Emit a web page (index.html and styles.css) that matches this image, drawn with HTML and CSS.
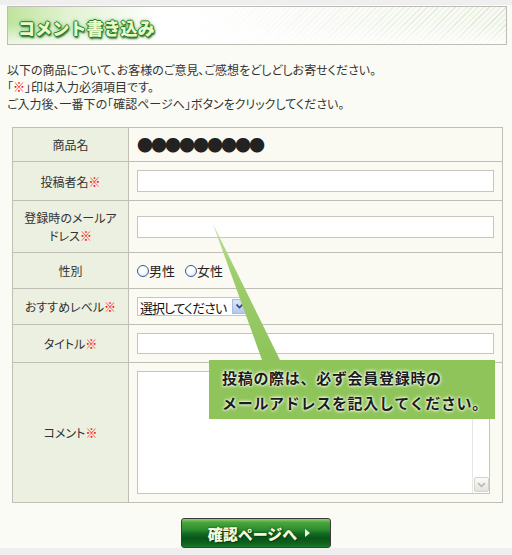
FILE: index.html
```html
<!DOCTYPE html>
<html lang="ja">
<head>
    <meta charset="UTF-8">
    <meta name="viewport" content="width=device-width, initial-scale=1.0">
    <title>コメント書き込み</title>
    <link rel="stylesheet" href="styles.css">
</head>
<body>
    <div class="page">
        <h2 class="heading"><span>コメント書き込み</span></h2>

        <p class="intro">
            以下の商品について、お客様のご意見、ご感想をどしどしお寄せください。<br>
            「<span class="req">※</span>」印は入力必須項目です。<br>
            ご入力後、一番下の「確認ページへ」ボタンをクリックしてください。
        </p>

        <form class="comment-form">
            <table class="form-table">
                <colgroup>
                    <col class="col-label">
                    <col>
                </colgroup>
                <tr>
                    <th>商品名</th>
                    <td class="item-name">●●●●●●●●●</td>
                </tr>
                <tr>
                    <th>投稿者名<span class="req">※</span></th>
                    <td><input type="text" class="text-input"></td>
                </tr>
                <tr>
                    <th class="two-lines">登録時のメールア<br>ドレス<span class="req">※</span></th>
                    <td><input type="text" class="text-input"></td>
                </tr>
                <tr>
                    <th>性別</th>
                    <td class="gender">
                        <label><input type="radio" name="sex">男性</label>
                        <label><input type="radio" name="sex">女性</label>
                    </td>
                </tr>
                <tr>
                    <th>おすすめレベル<span class="req">※</span></th>
                    <td>
                        <div class="select-box">
                            <select>
                                <option selected>選択してください</option>
                                <option>★★★★★</option>
                                <option>★★★★</option>
                                <option>★★★</option>
                                <option>★★</option>
                                <option>★</option>
                            </select>
                            <span class="select-arrow">
                                <svg width="7" height="5" viewBox="0 0 7 5"><path d="M0.5 0.5 L3.5 3.5 L6.5 0.5" fill="none" stroke="#33467a" stroke-width="1.6"/></svg>
                            </span>
                        </div>
                    </td>
                </tr>
                <tr>
                    <th>タイトル<span class="req">※</span></th>
                    <td><input type="text" class="text-input title-input"></td>
                </tr>
                <tr>
                    <th>コメント<span class="req">※</span></th>
                    <td>
                        <div class="comment-box">
                            <textarea></textarea>
                            <div class="fake-scroll">
                                <span class="scroll-btn">
                                    <svg width="9" height="6" viewBox="0 0 9 6"><path d="M1 1 L4.5 4.5 L8 1" fill="none" stroke="#b4b4ae" stroke-width="1.5"/></svg>
                                </span>
                            </div>
                        </div>
                    </td>
                </tr>
            </table>

            <div class="actions">
                <button type="submit" class="confirm-btn">確認ページへ<svg class="btn-arrow" width="5" height="8" viewBox="0 0 5 8"><path d="M0 0 L5 4 L0 8 Z" fill="#f2f6e4"/></svg></button>
            </div>
        </form>

        <!-- tooltip over the form -->
        <div class="callout">
            <svg class="callout-tail" width="80" height="136" viewBox="0 0 80 136">
                <defs>
                    <linearGradient id="tail" x1="0" y1="0" x2="0" y2="1">
                        <stop offset="0" stop-color="#c2e2a0"/>
                        <stop offset="0.35" stop-color="#9fcd6e"/>
                        <stop offset="1" stop-color="#8ec45a"/>
                    </linearGradient>
                </defs>
                <polygon points="4,0 53,136 71,136" fill="url(#tail)"/>
            </svg>
            <p>投稿の際は、必ず会員登録時の<br>メールアドレスを記入してください。</p>
        </div>
    </div>
</body>
</html>
```

FILE: styles.css
```css
html, body {
    margin: 0;
    background-color: #efefef;
}
body {
    font-family: "Noto Sans CJK JP", sans-serif;
    color: #333333;
}
.page {
    position: relative;
    margin-top: 5px;
    padding-top: 1px;
    height: 542px;
    background-color: #fbfbf5;
}

/* heading bar */
.heading {
    margin: 0 0 0 7px;
    width: 500px;
    height: 39px;
    box-sizing: border-box;
    border: 1px solid #bdbdb5;
    display: flex;
    align-items: center;
    padding: 4px 0 0 10px;
    background:
        linear-gradient(to bottom, rgba(255, 255, 255, 0) 45%, rgba(255, 255, 255, 0.75) 100%),
        linear-gradient(to right, #bfe49c 0%, #e2f2d2 12%, #ffffff 30%, rgba(255, 255, 255, 0.95) 42%, rgba(255, 255, 255, 0.15) 100%),
        repeating-linear-gradient(135deg, #d9e4cf 0 1px, #f5f8ef 1px 4px);
}
.heading span {
    font-size: 17px;
    font-weight: 900;
    color: #eef8c8;
    letter-spacing: 0.1px;
    text-shadow: 1px 0 0 #1c8224, -1px 0 0 #1c8224, 0 1px 0 #1c8224, 0 -1px 0 #1c8224, 0 0 4px #3aa442, 1px 2px 2px #0b5010;
}

.intro {
    margin: 16px 0 0 7px;
    font-size: 12px;
    line-height: 17px;
    font-feature-settings: "palt";
}
.req {
    color: #ff0000;
}

/* form table */
.form-table {
    margin: 15px 0 0 12px;
    width: 491px;
    border-collapse: collapse;
    font-size: 12px;
    font-feature-settings: "palt";
}
.col-label {
    width: 116px;
}
.form-table th,
.form-table td {
    border: 1px solid #bfbfb6;
    padding: 8px;
    line-height: 17px;
}
.form-table th {
    background-color: #ebf0e1;
    font-weight: normal;
    text-align: center;
    color: #333333;
}
.form-table th.two-lines {
    line-height: 17.5px;
}
.form-table td {
    background-color: #fafaf3;
}
.item-name {
    font-size: 16px;
    letter-spacing: -2px;
    color: #222222;
    font-feature-settings: normal;
}
.text-input {
    display: block;
    width: 100%;
    height: 22px;
    box-sizing: border-box;
    border: 1px solid #c6c6be;
    background-color: #ffffff;
    margin: 0;
}
.title-input {
    height: 21px;
}
.gender {
    font-size: 13px;
    line-height: 19px !important;
    color: #222222;
}
.gender label {
    margin-right: 7px;
}
.gender input[type="radio"] {
    appearance: none;
    width: 12px;
    height: 12px;
    margin: 0;
    border: 1px solid #3a5890;
    border-radius: 50%;
    background: radial-gradient(circle at 40% 35%, #ffffff 30%, #d6dfec 100%);
    vertical-align: -1px;
}
.select-box {
    display: flex;
    width: 112px;
    height: 19px;
    box-sizing: border-box;
    border: 1px solid #c6c6be;
    background-color: #ffffff;
}
.select-box select {
    appearance: none;
    flex: 1;
    min-width: 0;
    border: none;
    outline: none;
    background: transparent;
    padding: 0 0 0 2px;
    font-family: "Noto Sans CJK JP", sans-serif;
    font-size: 13px;
    letter-spacing: -1px;
    font-feature-settings: "palt";
    color: #111111;
}
.select-arrow {
    width: 13px;
    margin: 1px;
    display: flex;
    align-items: center;
    justify-content: center;
    border: 1px solid #a9bbe2;
    background: linear-gradient(to bottom, #dbe5f8, #b5c7ee);
}
.comment-box {
    display: flex;
    width: 353px;
    height: 123px;
    box-sizing: border-box;
    border: 1px solid #c6c6be;
    background-color: #ffffff;
}
.comment-box textarea {
    flex: 1;
    border: none;
    outline: none;
    resize: none;
    overflow: hidden;
    padding: 2px;
}
.fake-scroll {
    width: 16px;
    border-left: 1px solid #e6e6e1;
    display: flex;
    flex-direction: column;
    justify-content: flex-end;
    align-items: center;
    padding-bottom: 1px;
}
.scroll-btn {
    width: 15px;
    height: 15px;
    box-sizing: border-box;
    border: 1px solid #d4d4cd;
    border-radius: 2px;
    background: linear-gradient(to bottom, #fbfbf8, #e3e3dc);
    display: flex;
    align-items: center;
    justify-content: center;
}

/* submit */
.actions {
    margin-top: 15px;
    text-align: center;
}
.confirm-btn {
    width: 150px;
    height: 30px;
    padding: 0 0 0 6px;
    border: 1px solid #3c3c3c;
    border-radius: 3px;
    background: linear-gradient(to bottom, #8fd06a 0%, #4aa63e 12%, #2b8a2c 40%, #136a22 52%, #0a5619 70%, #106620 90%, #1d7d2c 100%);
    color: #f4f8dc;
    font-family: "Noto Sans CJK JP", sans-serif;
    font-size: 15px;
    font-weight: 900;
    text-shadow: 0 0 2px #0a4012, 1px 1px 1px #083a10;
    display: inline-flex;
    align-items: center;
    justify-content: center;
    cursor: pointer;
}
.btn-arrow {
    margin-left: 8px;
}

/* green tooltip */
.callout {
    position: absolute;
    left: 209px;
    top: 355px;
    width: 286px;
    height: 59px;
    box-sizing: border-box;
    padding: 5px 0 0 13px;
    background-color: #8ec45a;
}
.callout-tail {
    position: absolute;
    left: 0;
    top: -136px;
}
.callout p {
    margin: 0;
    font-size: 15px;
    font-weight: bold;
    line-height: 25px;
    letter-spacing: 0.7px;
    color: #1c1c1c;
    text-shadow: 0 0 2px #ffffff, 0 0 3px #f4ffe2, 0 0 4px #eaf8d0;
}
```
